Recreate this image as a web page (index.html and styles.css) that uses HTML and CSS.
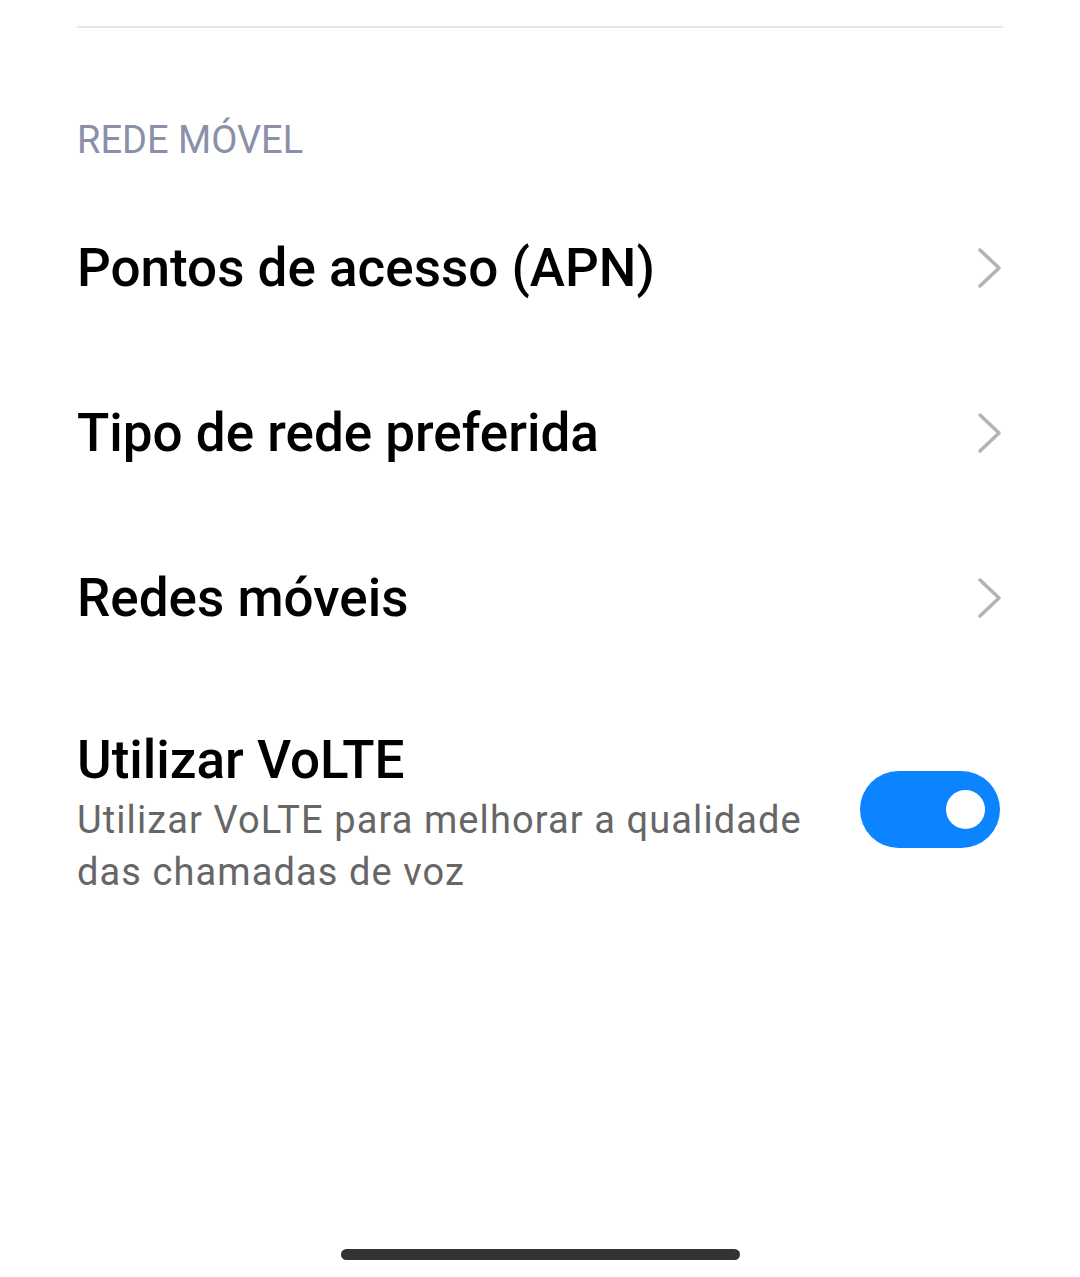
FILE: index.html
```html
<!DOCTYPE html>
<html lang="pt">

<head>
    <meta charset="UTF-8">
    <meta name="viewport" content="width=device-width, initial-scale=1.0">
    <title>Rede móvel</title>
    <link rel="stylesheet" href="styles.css">
</head>

<body>
    <div class="screen">
        <div class="content">
            <div class="divider"></div>

            <!-- Section: mobile network -->
            <h2 class="section-title">REDE MÓVEL</h2>

            <div class="row">
                <span class="row-title">Pontos de acesso (APN)</span>
                <svg class="chevron" width="26" height="42" viewBox="0 0 26 42">
                    <path d="M3 3 L22 21 L3 39" fill="none" stroke="#b3b3b3" stroke-width="3.5" stroke-linecap="round" stroke-linejoin="round"/>
                </svg>
            </div>

            <div class="row">
                <span class="row-title">Tipo de rede preferida</span>
                <svg class="chevron" width="26" height="42" viewBox="0 0 26 42">
                    <path d="M3 3 L22 21 L3 39" fill="none" stroke="#b3b3b3" stroke-width="3.5" stroke-linecap="round" stroke-linejoin="round"/>
                </svg>
            </div>

            <div class="row">
                <span class="row-title">Redes móveis</span>
                <svg class="chevron" width="26" height="42" viewBox="0 0 26 42">
                    <path d="M3 3 L22 21 L3 39" fill="none" stroke="#b3b3b3" stroke-width="3.5" stroke-linecap="round" stroke-linejoin="round"/>
                </svg>
            </div>

            <div class="row row-toggle">
                <div class="row-text">
                    <span class="row-title">Utilizar VoLTE</span>
                    <p class="row-desc">Utilizar VoLTE para melhorar a qualidade das chamadas de voz</p>
                </div>
                <div class="switch on">
                    <div class="knob"></div>
                </div>
            </div>
        </div>

        <!-- Gesture bar -->
        <div class="home-bar"></div>
    </div>
</body>

</html>
```

FILE: styles.css
```css
/* Base Styles */
body, html {
    margin: 0;
    padding: 0;
    font-family: Roboto, "Noto Sans", sans-serif;
    background-color: #ffffff;
}

.screen {
    min-height: 100vh;
    display: flex;
    flex-direction: column;
}

.content {
    padding: 0 77px;
}

.divider {
    margin-top: 26px;
    height: 2px;
    background-color: #e6e6e6;
}

.section-title {
    margin: 87px 0 20px;
    height: 50px;
    line-height: 50px;
    font-size: 38px;
    font-weight: 400;
    color: #8a90a8;
}

/* Rows */
.row {
    height: 165px;
    display: flex;
    justify-content: space-between;
    align-items: center;
}

.row-title {
    display: block;
    font-size: 53px;
    font-weight: 500;
    color: #000;
    line-height: 60px;
}

.row-toggle {
    height: auto;
    padding-top: 50px;
}

.row-text {
    width: 740px;
}

.row-desc {
    margin: 4px 0 0;
    font-size: 38px;
    letter-spacing: 1.1px;
    line-height: 52px;
    color: #666666;
}

/* Switch */
.switch {
    width: 140px;
    height: 77px;
    border-radius: 39px;
    background-color: #d9d9d9;
    display: flex;
    align-items: center;
    justify-content: flex-start;
    padding: 0 15px;
    box-sizing: border-box;
    margin-right: 3px;
    margin-top: -10px;
}

.switch.on {
    background-color: #0d84ff;
    justify-content: flex-end;
}

.knob {
    width: 39px;
    height: 39px;
    border-radius: 50%;
    background-color: #fff;
}

.home-bar {
    margin: auto auto 17px;
    width: 399px;
    height: 11px;
    border-radius: 6px;
    background-color: #333333;
}
```
